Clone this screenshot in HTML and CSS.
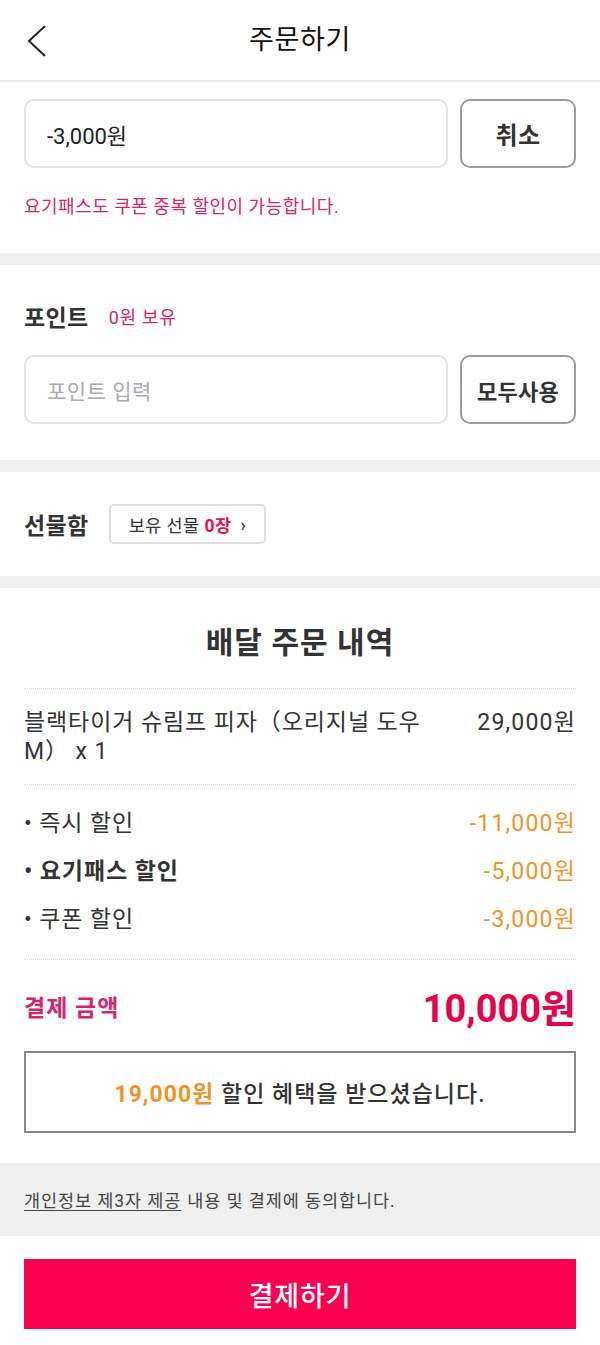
FILE: index.html
```html
<!DOCTYPE html>
<html lang="ko">
<head>
<meta charset="utf-8">
<title>주문하기</title>
<link rel="stylesheet" href="styles.css">
</head>
<body>
<div class="page">
  <header class="topbar">
    <div class="back">
      <svg width="20" height="32" viewBox="0 0 20 32"><polyline points="18,1 2,16 18,31" fill="none" stroke="#222" stroke-width="2"/></svg>
    </div>
    <h1 class="title">주문하기</h1>
    <div></div>
  </header>

  <section class="block coupon">
    <div class="field-row">
      <div class="field">-3,000원</div>
      <button class="btn-outline">취소</button>
    </div>
    <p class="note">요기패스도 쿠폰 중복 할인이 가능합니다.</p>
  </section>

  <div class="sep"></div>

  <section class="block points">
    <div class="label-row">
      <span class="label">포인트</span>
      <span class="owned">0원 보유</span>
    </div>
    <div class="field-row">
      <div class="field placeholder">포인트 입력</div>
      <button class="btn-outline">모두사용</button>
    </div>
  </section>

  <div class="sep"></div>

  <section class="block gift">
    <span class="label gift-label">선물함</span>
    <span class="chip">보유 선물 <b class="chip-count">0장</b> <span class="chip-arrow">›</span></span>
  </section>

  <div class="sep"></div>

  <section class="order">
    <h2 class="order-title">배달 주문 내역</h2>
    <div class="item-row">
      <div class="item-name">블랙타이거 슈림프 피자（오리지널 도우 M） x 1</div>
      <div class="item-price">29,000원</div>
    </div>
    <div class="discounts">
      <div class="disc-row"><span>• 즉시 할인</span><span class="disc-amt">-11,000원</span></div>
      <div class="disc-row"><span class="strong">• 요기패스 할인</span><span class="disc-amt">-5,000원</span></div>
      <div class="disc-row"><span>• 쿠폰 할인</span><span class="disc-amt">-3,000원</span></div>
    </div>
    <div class="total-row">
      <span class="total-label">결제 금액</span>
      <span class="total-amt">10,000원</span>
    </div>
    <div class="benefit"><span class="benefit-amt">19,000원</span> 할인 혜택을 받으셨습니다.</div>
  </section>

  <div class="agree"><span class="agree-link">개인정보 제3자 제공</span> 내용 및 결제에 동의합니다.</div>

  <div class="pay-wrap">
    <button class="pay">결제하기</button>
  </div>
</div>
</body>
</html>
```

FILE: styles.css
```css
* { box-sizing: border-box; }
html, body { margin: 0; padding: 0; background: #fff; }
body {
  font-family: Roboto, "Noto Sans CJK KR", sans-serif;
  color: #333;
  width: 600px;
}
.page { width: 600px; }

.topbar {
  height: 82px;
  border-bottom: 2px solid #ececec;
  display: grid;
  grid-template-columns: 1fr auto 1fr;
  align-items: center;
}
.back { padding-left: 27px; display: flex; align-items: center; padding-top: 2px; }
.title {
  margin: 0;
  font-size: 27px;
  letter-spacing: 0.6px;
  font-weight: 400;
  color: #111;
  line-height: 36px;
}

.block { padding: 0 24px; }
.coupon { padding-top: 17px; padding-bottom: 34px; }

.field-row { display: flex; gap: 12px; height: 69px; }
.field {
  flex: 1;
  border: 2px solid #e3e3e3;
  border-radius: 10px;
  display: flex;
  align-items: center;
  padding-left: 21px;
  font-size: 22px;
  color: #222;
}
.field.placeholder { color: #aaa; font-size: 21px; letter-spacing: 0.5px; }
.btn-outline {
  width: 116px;
  background: #fff;
  border: 2px solid #9b9b9b;
  border-radius: 10px;
  font-family: inherit;
  font-size: 22px;
  letter-spacing: 0.3px;
  font-weight: 700;
  color: #333;
  padding: 0;
}
.coupon .btn-outline { font-size: 24px; }
.note {
  margin: 27px 0 0;
  font-size: 18px;
  letter-spacing: 0.5px;
  line-height: 24px;
  color: #d6246e;
}

.sep { height: 12px; background: #efefef; }

.points { padding-top: 36px; padding-bottom: 36px; }
.label-row { display: flex; align-items: center; gap: 20px; height: 30px; margin-bottom: 24px; }
.label { font-size: 23px; letter-spacing: 0.4px; font-weight: 700; color: #333; }
.owned { font-size: 18px; letter-spacing: 0.7px; color: #d6246e; }

.gift { padding-top: 32px; padding-bottom: 32px; display: flex; align-items: center; gap: 20px; }
.gift-label { font-size: 23px; }
.chip {
  height: 40px;
  border: 2px solid #dedede;
  border-radius: 5px;
  display: inline-flex;
  align-items: center;
  padding: 0 18px 0 18px;
  font-size: 17.5px;
  letter-spacing: 0.4px;
  color: #333;
  gap: 5px;
}
.chip-count { color: #e0105e; font-weight: 700; }
.chip-arrow { font-size: 18px; margin-left: 4px; }

.order { padding: 0 24px; }
.order-title {
  margin: 0;
  padding-top: 35px;
  padding-bottom: 25px;
  text-align: center;
  font-size: 30px;
  letter-spacing: 1px;
  line-height: 40px;
  font-weight: 700;
  color: #333;
}
.item-row {
  border-top: 1px dotted #d8d8d8;
  border-bottom: 1px dotted #d8d8d8;
  display: flex;
  justify-content: space-between;
  padding: 19px 0 18px;
  font-size: 23px;
  letter-spacing: 0.9px;
  line-height: 29px;
  color: #333;
}
.item-name { width: 420px; }
.item-price { white-space: nowrap; letter-spacing: 1.2px; }

.discounts { padding: 15px 0; border-bottom: 1px dotted #d8d8d8; }
.disc-row {
  display: flex;
  justify-content: space-between;
  font-size: 23px;
  letter-spacing: 0.9px;
  line-height: 48px;
  color: #333;
}
.strong { font-weight: 700; }
.disc-amt { color: #ef9428; letter-spacing: 1.2px; }

.total-row {
  height: 91px;
  display: flex;
  justify-content: space-between;
  align-items: center;
}
.total-label { font-size: 23px; letter-spacing: 1px; font-weight: 700; color: #d6246e; }
.total-amt { font-size: 38px; font-weight: 700; color: #e6004e; }

.benefit {
  height: 82px;
  border: 2px solid #8a8a8a;
  display: flex;
  align-items: center;
  justify-content: center;
  font-size: 23px;
  letter-spacing: 1px;
  font-weight: 500;
  color: #333;
  white-space: pre;
  margin-bottom: 30px;
}
.benefit-amt { color: #ef9428; font-weight: 700; }

.agree {
  height: 73px;
  background: #efefef;
  display: flex;
  align-items: center;
  padding: 0 24px;
  font-size: 17.5px;
  letter-spacing: 0.9px;
  color: #444;
}
.agree-link { text-decoration: underline; text-underline-offset: 3px; margin-right: 6px; }

.pay-wrap { padding: 23px 24px 17px; }
.pay {
  width: 100%;
  height: 70px;
  border: none;
  background: #fa0050;
  color: #fff;
  font-family: inherit;
  font-size: 27px;
  letter-spacing: 0.8px;
  font-weight: 500;
  display: block;
}
```
